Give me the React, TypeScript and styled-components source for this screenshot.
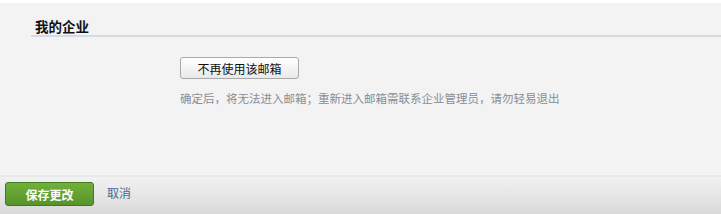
import React from "react";
import styled, { createGlobalStyle } from "styled-components";

const Global = createGlobalStyle`
  html, body { margin: 0; padding: 0; background: #ffffff; }
  body { font-family: "Liberation Sans", "Noto Sans CJK SC", sans-serif; font-size: 12px; }
`;

const Page = styled.div`
  width: 721px;
  height: 214px;
  padding-top: 3px;
  box-sizing: border-box;
  display: flex;
  flex-direction: column;
`;

const Main = styled.div`
  flex: 1;
  background: #f3f3f3;
  padding: 17px 0 0 31px;
  display: flex;
  flex-direction: column;
`;

const Title = styled.div`
  font-weight: bold;
  font-size: 13.5px;
  color: #111;
  padding: 0 0 0 4px;
  line-height: 15px;
  border-bottom: 2px solid #d6d8e2;
`;

const Body = styled.div`
  padding: 20px 0 0 149px;
  display: flex;
  flex-direction: column;
  align-items: flex-start;
`;

const PlainButton = styled.button`
  height: 22px;
  width: 119px;
  border: 1px solid #a9a9a9;
  border-radius: 3px;
  background: linear-gradient(#ffffff, #e9e9e9);
  font-family: "Liberation Sans", "Noto Sans CJK SC", sans-serif;
  font-size: 12px;
  color: #111;
  padding: 0;
`;

const Hint = styled.div`
  margin-top: 13px;
  color: #888d97;
  font-size: 11.5px;
  line-height: 14px;
`;

const Footer = styled.div`
  height: 39px;
  border-top: 2px solid #e8e8e8;
  background: linear-gradient(#f2f2f2, #d9d9d9);
  display: flex;
  align-items: flex-start;
  padding: 5px 0 0 5px;
  box-sizing: border-box;
  gap: 13px;
  flex-shrink: 0;
`;

const SaveButton = styled.button`
  width: 89px;
  height: 24px;
  border: 1px solid #3f7a1c;
  border-radius: 3px;
  background: linear-gradient(#72b03c, #56942a);
  color: #fff;
  font-weight: bold;
  font-size: 12px;
  font-family: "Liberation Sans", "Noto Sans CJK SC", sans-serif;
  padding: 0;
`;

const CancelLink = styled.a`
  color: #4d6794;
  font-size: 12px;
  line-height: 24px;
  cursor: pointer;
`;

export default function App() {
  return (
    <Page>
      <Global />
      <Main>
        <Title>我的企业</Title>
        <Body>
          <PlainButton>不再使用该邮箱</PlainButton>
          <Hint>确定后，将无法进入邮箱；重新进入邮箱需联系企业管理员，请勿轻易退出</Hint>
        </Body>
      </Main>
      <Footer>
        <SaveButton>保存更改</SaveButton>
        <CancelLink>取消</CancelLink>
      </Footer>
    </Page>
  );
}
